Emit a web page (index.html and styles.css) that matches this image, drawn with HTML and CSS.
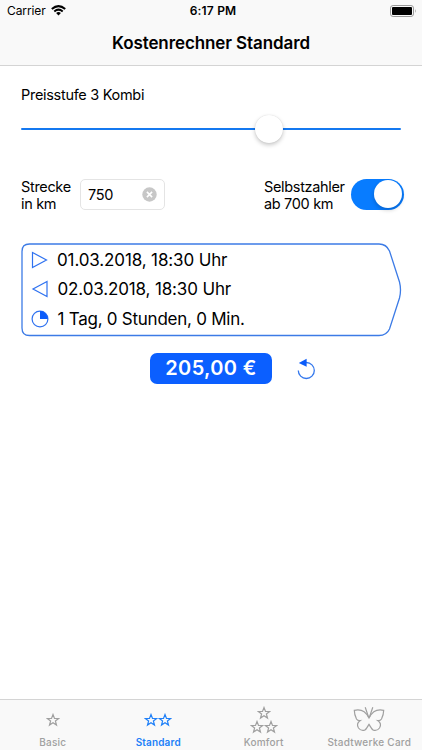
FILE: index.html
```html
<!DOCTYPE html>
<html lang="de">
<head>
    <meta charset="UTF-8">
    <meta name="viewport" content="width=device-width, initial-scale=1.0">
    <title>Kostenrechner Standard</title>
    <link rel="stylesheet" href="styles.css">
</head>
<body>
    <svg class="defs" width="0" height="0">
        <symbol id="star" viewBox="-7 -7 14 14">
            <path d="M0 -5.5L1.5 -1.6L5.6 -1.5L2.4 1L3.5 5L0 2.7L-3.5 5L-2.4 1L-5.6 -1.5L-1.5 -1.6Z" fill="none" stroke="currentColor" stroke-width="1.2"/>
        </symbol>
    </svg>

    <header class="header">
        <div class="status">
            <div class="carrier">
                <span>Carrier</span>
                <svg width="15" height="11" viewBox="0 0 15 11">
                    <path d="M.8 4Q7.5 -1.8 14.2 4M3.3 6.4Q7.5 2.9 11.7 6.4" fill="none" stroke="#000" stroke-width="2"/>
                    <path d="M5.1 8Q7.5 6.1 9.9 8L7.5 10.5Z"/>
                </svg>
            </div>
            <span class="clock">6:17 PM</span>
            <svg class="battery" width="27" height="12" viewBox="0 0 27 12">
                <rect x=".5" y=".5" width="23" height="11" rx="2.6" fill="none" stroke="#999"/>
                <rect x="2" y="2" width="20" height="8" rx="1"/>
                <path d="M25 4Q26.6 6 25 8Z" fill="#999"/>
            </svg>
        </div>
        <h1>Kostenrechner Standard</h1>
    </header>

    <main>
        <div class="level">Preisstufe 3 Kombi</div>
        <div class="slider"><div class="thumb"></div></div>

        <div class="options">
            <label class="distance-label">Strecke<br>in km</label>
            <div class="field">
                <span>750</span>
                <svg width="15" height="15" viewBox="0 0 15 15">
                    <circle cx="7.5" cy="7.5" r="7.2" fill="#c7c7c7"/>
                    <path d="M4.9 4.9L10.1 10.1M10.1 4.9L4.9 10.1" stroke="#fff" stroke-width="1.6"/>
                </svg>
            </div>
            <label class="payer-label">Selbstzahler<br>ab 700 km</label>
            <div class="toggle"><div class="knob"></div></div>
        </div>

        <div class="trip">
            <svg class="outline" width="382" height="94" viewBox="0 0 382 94">
                <path d="M8.5 1H358C363 1 366.5 3.5 368.5 8L378.5 39Q380.5 47 378.5 55L368.5 86C366.5 90.5 363 92.5 358 92.5H8.5Q1 92.5 1 85V8.5Q1 1 8.5 1Z" fill="none" stroke="#3c7be6" stroke-width="1.3"/>
            </svg>
            <div class="row">
                <svg width="18" height="18" viewBox="0 0 18 18"><path d="M1.5 1.5L15.5 9L1.5 16.5Z"/></svg>
                <span class="start">01.03.2018, 18:30 Uhr</span>
            </div>
            <div class="row">
                <svg width="18" height="18" viewBox="0 0 18 18"><path d="M16 1.5L2 9L16 16.5Z"/></svg>
                <span class="end">02.03.2018, 18:30 Uhr</span>
            </div>
            <div class="row">
                <svg width="18" height="18" viewBox="0 0 18 18">
                    <circle cx="9" cy="9" r="7.9"/>
                    <path class="fill" d="M9 9V1.1A7.9 7.9 0 0 1 16.9 9Z"/>
                </svg>
                <span class="duration">1 Tag, 0 Stunden, 0 Min.</span>
            </div>
        </div>

        <div class="result">
            <div class="price"><span>205,00 €</span></div>
            <svg width="20" height="22" viewBox="0 0 20 22">
                <path d="M8 4.5H9.3A8 8 0 1 1 1.3 12.5" fill="none" stroke="#3478ed" stroke-width="1.3"/>
                <path d="M1.8 4.9L9.6 .8V8.8Z" fill="#0b5cfa"/>
            </svg>
        </div>
    </main>

    <nav class="tabs">
        <div class="tab">
            <div class="icon"><svg class="star"><use href="#star"/></svg></div>
            <span class="basic">Basic</span>
        </div>
        <div class="tab active">
            <div class="icon"><svg class="star"><use href="#star"/></svg><svg class="star"><use href="#star"/></svg></div>
            <span class="standard">Standard</span>
        </div>
        <div class="tab">
            <div class="icon three">
                <svg class="star"><use href="#star"/></svg>
                <div><svg class="star"><use href="#star"/></svg><svg class="star"><use href="#star"/></svg></div>
            </div>
            <span class="komfort">Komfort</span>
        </div>
        <div class="tab">
            <div class="icon">
                <svg width="32" height="28" viewBox="0 0 32 28" fill="none" stroke="#a0a0a0" stroke-width="1.2">
                    <path d="M16 12C13.5 7.5 10.5 2.5 1.3 4.3C1.3 7 2 10 3.5 13Q4.5 14.8 7.3 14.6C4 17 4.2 20 5.5 22C7 24 9.5 24.8 11.5 24.2C13.5 23.5 14.5 20.5 16 18.3C17.5 20.5 18.5 23.5 20.5 24.2C22.5 24.8 25 24 26.5 22C27.8 20 28 17 24.7 14.6Q27.5 14.8 28.5 13C30 10 30.7 7 30.7 4.3C21.5 2.5 18.5 7.5 16 12Z"/>
                    <path d="M12.2 1.3L15.6 11.3M19.8 1.3L16.4 11.3"/>
                </svg>
            </div>
            <span class="card">Stadtwerke Card</span>
        </div>
    </nav>
</body>
</html>
```

FILE: styles.css
```css
body {
    margin: 0;
    height: 750px;
    display: flex;
    flex-direction: column;
    overflow: hidden;
    background: #fff;
    color: #000;
    font-family: Inter, "Liberation Sans", sans-serif;
}
svg {
    display: block;
    flex-shrink: 0;
}
.defs {
    position: absolute;
}
.header {
    height: 65px;
    background: #f9f9f9;
    border-bottom: 1px solid #d4d4d4;
}
.status {
    height: 21px;
    display: grid;
    grid-template-columns: 1fr auto 1fr;
    align-items: center;
    padding: 0 5px 0 7px;
    font-size: 12px;
}
.carrier {
    display: flex;
    align-items: center;
    gap: 5px;
    letter-spacing: -0.1px;
}
.clock {
    padding-left: 2px;
    font-weight: 600;
    letter-spacing: 0.2px;
}
.battery {
    justify-self: end;
}
h1 {
    margin: 0;
    font-size: 17px;
    font-weight: 600;
    line-height: 45px;
    letter-spacing: -0.1px;
    text-align: center;
}
main {
    flex: 1;
    padding: 19px 18px 0 21px;
}
.level {
    font-size: 14.5px;
    line-height: 20px;
    letter-spacing: -0.3px;
}
.slider {
    width: 380px;
    height: 2px;
    margin-top: 23px;
    border-radius: 1px;
    background: #1478f0;
    display: flex;
    align-items: center;
}
.thumb {
    flex-shrink: 0;
    width: 28px;
    height: 28px;
    margin-left: 234px;
    border-radius: 50%;
    background: #fff;
    box-shadow: 0 2px 4px rgba(0, 0, 0, .22), 0 0 1px rgba(0, 0, 0, .15);
}
.options {
    display: flex;
    align-items: center;
    height: 34px;
    margin-top: 48px;
    font-size: 14.5px;
    line-height: 17px;
    letter-spacing: -0.33px;
}
.distance-label {
    width: 59px;
}
.field {
    box-sizing: border-box;
    width: 85px;
    height: 31px;
    margin-bottom: 1px;
    padding: 0 7px;
    border: 1px solid #e4e4e4;
    border-radius: 5px;
    display: flex;
    align-items: center;
    justify-content: space-between;
}
.payer-label {
    width: 87px;
    margin-left: 99px;
    white-space: nowrap;
}
.toggle {
    box-sizing: border-box;
    width: 52.5px;
    height: 31.5px;
    margin-bottom: 1.5px;
    padding: 1.7px;
    border-radius: 16px;
    background: #087cff;
    display: flex;
    justify-content: flex-end;
}
.knob {
    width: 28px;
    height: 28px;
    border-radius: 50%;
    background: #fff;
    box-shadow: 0 2px 4px rgba(0, 0, 0, .2);
}
.trip {
    position: relative;
    box-sizing: border-box;
    width: 382px;
    height: 94px;
    margin-top: 30.5px;
    padding: 2.5px 0 0 10px;
}
.outline {
    position: absolute;
    left: 0;
    top: 0;
}
.row {
    display: flex;
    align-items: center;
    gap: 8px;
    height: 29.5px;
    font-size: 17px;
    white-space: nowrap;
}
.start {
    letter-spacing: -0.13px;
}
.end {
    padding-left: 0.5px;
    letter-spacing: -0.14px;
}
.duration {
    padding-left: 0.5px;
    letter-spacing: -0.25px;
}
.row svg {
    fill: none;
    stroke: #2f72f0;
    stroke-width: 1.2;
}
.row .fill {
    fill: #0b5cfa;
    stroke: none;
}
.result {
    display: flex;
    align-items: center;
    gap: 25px;
    margin: 16.5px 0 0 129px;
}
.price {
    width: 122px;
    height: 31px;
    border-radius: 7px;
    background: #0b5fff;
    color: #fff;
    font-size: 20px;
    font-weight: 600;
    line-height: 31px;
    letter-spacing: 0.35px;
    text-align: center;
}
.tabs {
    box-sizing: border-box;
    height: 51px;
    display: grid;
    grid-template-columns: repeat(4, 1fr);
    background: #f9f9f9;
    border-top: 1px solid #d4d4d4;
    color: #a0a0a0;
    font-size: 10px;
    font-weight: 500;
    letter-spacing: 0.23px;
}
.tab {
    display: flex;
    flex-direction: column;
    align-items: center;
    line-height: 12px;
    white-space: nowrap;
}
.active {
    color: #2080f8;
}
.active span {
    font-weight: 600;
    letter-spacing: 0.15px;
}
.icon {
    height: 36px;
    padding-top: 3px;
    box-sizing: border-box;
    display: flex;
    align-items: center;
}
.star {
    width: 14px;
    height: 14px;
}
.three {
    flex-direction: column;
    justify-content: center;
}
.three div {
    display: flex;
}
```
